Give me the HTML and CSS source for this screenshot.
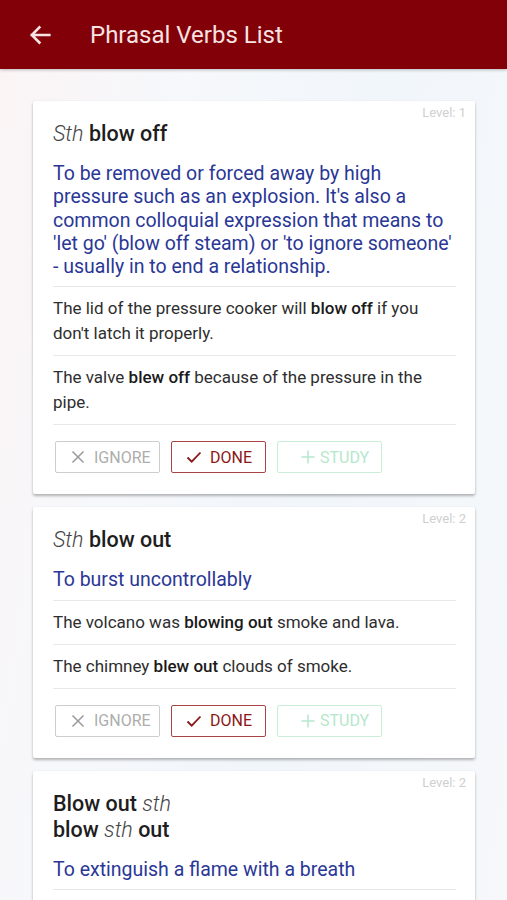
FILE: index.html
```html
<!DOCTYPE html>
<html lang="en">
<head>
<meta charset="utf-8">
<title>Phrasal Verbs List</title>
<link rel="stylesheet" href="styles.css">
</head>
<body>
<header class="appbar">
  <svg class="back" viewBox="0 0 24 24" width="28" height="28" aria-hidden="true">
    <path d="M20 12H5M11.5 5.5L5 12l6.5 6.5" fill="none" stroke="currentColor" stroke-width="2.2" stroke-linecap="square"/>
  </svg>
  <h1 class="appbar-title">Phrasal Verbs List</h1>
</header>
<main class="list">
  <article class="card">
    <span class="level">Level: 1</span>
    <h2 class="verb"><i>Sth</i> blow off</h2>
    <p class="def">To be removed or forced away by high pressure such as an explosion. It's also a common colloquial expression that means to 'let go' (blow off steam) or 'to ignore someone' - usually in to end a relationship.</p>
    <p class="ex">The lid of the pressure cooker will <b>blow off</b> if you don't latch it properly.</p>
    <p class="ex">The valve <b>blew off</b> because of the pressure in the pipe.</p>
    <div class="actions">
      <button class="btn ignore"><svg viewBox="0 0 16 16" width="16" height="16"><path d="M2.5 2.5l11 11M13.5 2.5l-11 11" stroke="currentColor" stroke-width="1.5" fill="none"/></svg>IGNORE</button>
      <button class="btn done"><svg viewBox="0 0 16 16" width="16" height="16"><path d="M1.5 8.5l4.2 4.2L14.5 3.5" stroke="currentColor" stroke-width="1.8" fill="none"/></svg>DONE</button>
      <button class="btn study"><svg viewBox="0 0 16 16" width="16" height="16"><path d="M8 1.5v13M1.5 8h13" stroke="currentColor" stroke-width="1.5" fill="none"/></svg>STUDY</button>
    </div>
  </article>
  <article class="card">
    <span class="level">Level: 2</span>
    <h2 class="verb"><i>Sth</i> blow out</h2>
    <p class="def">To burst uncontrollably</p>
    <p class="ex">The volcano was <b>blowing out</b> smoke and lava.</p>
    <p class="ex">The chimney <b>blew out</b> clouds of smoke.</p>
    <div class="actions">
      <button class="btn ignore"><svg viewBox="0 0 16 16" width="16" height="16"><path d="M2.5 2.5l11 11M13.5 2.5l-11 11" stroke="currentColor" stroke-width="1.5" fill="none"/></svg>IGNORE</button>
      <button class="btn done"><svg viewBox="0 0 16 16" width="16" height="16"><path d="M1.5 8.5l4.2 4.2L14.5 3.5" stroke="currentColor" stroke-width="1.8" fill="none"/></svg>DONE</button>
      <button class="btn study"><svg viewBox="0 0 16 16" width="16" height="16"><path d="M8 1.5v13M1.5 8h13" stroke="currentColor" stroke-width="1.5" fill="none"/></svg>STUDY</button>
    </div>
  </article>
  <article class="card">
    <span class="level">Level: 2</span>
    <h2 class="verb">Blow out <i>sth</i><br>blow <i>sth</i> out</h2>
    <p class="def">To extinguish a flame with a breath</p>
  </article>
</main>
</body>
</html>
```
FILE: styles.css
```css
* { box-sizing: border-box; }
html, body { margin: 0; padding: 0; }
body {
  font-family: Roboto, "Liberation Sans", Arial, sans-serif;
  background: linear-gradient(100deg, #fbf4f5 0%, #f6f8fb 30%, #f1f6fb 60%, #f6f8fa 100%);
  height: 900px;
  overflow: hidden;
}
.appbar {
  height: 69px;
  background: #820008;
  display: flex;
  align-items: center;
  padding-left: 26px;
  color: #f7e3e3;
  box-shadow: 0 1px 3px rgba(0,0,0,0.25);
  position: relative;
  z-index: 1;
}
.back { display: block; margin-right: 36px; }
.appbar-title {
  margin: 0;
  font-size: 24px;
  font-weight: 400;
}
.list {
  padding: 32px 32px 0 33px;
  display: flex;
  flex-direction: column;
  gap: 13px;
}
.card {
  position: relative;
  background: #fff;
  border-radius: 2px;
  box-shadow: 0 2px 3px rgba(0,0,0,0.28), 0 0 2px rgba(0,0,0,0.06);
  padding: 20px 19px 21px 20px;
}
.level {
  position: absolute;
  top: 4px;
  right: 9px;
  font-size: 13px;
  color: #cfcfcf;
}
.verb {
  margin: 0;
  font-size: 21.5px;
  line-height: 26px;
  font-weight: 500;
  color: #1e1e1e;
}
.verb i {
  font-weight: 300;
  color: #444;
}
.def {
  margin: 15px 0 0;
  padding-bottom: 8px;
  font-size: 19.5px;
  line-height: 23.3px;
  color: #2a3796;
  border-bottom: 1px solid #e8e8e8;
}
.ex {
  margin: 0;
  padding: 9px 0;
  font-size: 17px;
  line-height: 25px;
  color: #2e2e2e;
  border-bottom: 1px solid #e8e8e8;
}
.ex b { font-weight: 500; color: #1a1a1a; }
.actions {
  display: flex;
  gap: 11px;
  margin: 16px 0 0 2px;
}
.btn {
  height: 32px;
  display: flex;
  align-items: center;
  gap: 8px;
  padding: 0 14px;
  background: #fff;
  border: 1.5px solid;
  border-radius: 2px;
  font-family: inherit;
  font-size: 16px;
  font-weight: 400;
}
.btn svg { display: block; flex: none; }
.ignore { width: 105px; color: #adadad; border-color: #cdcdcd; }
.ignore svg { color: #9a9a9a; }
.done { width: 95px; color: #8c1717; border-color: #a84444; }
.study { width: 105px; color: #b5e8cb; border-color: #c9efd8; padding-left: 22px; gap: 4px; }
```
